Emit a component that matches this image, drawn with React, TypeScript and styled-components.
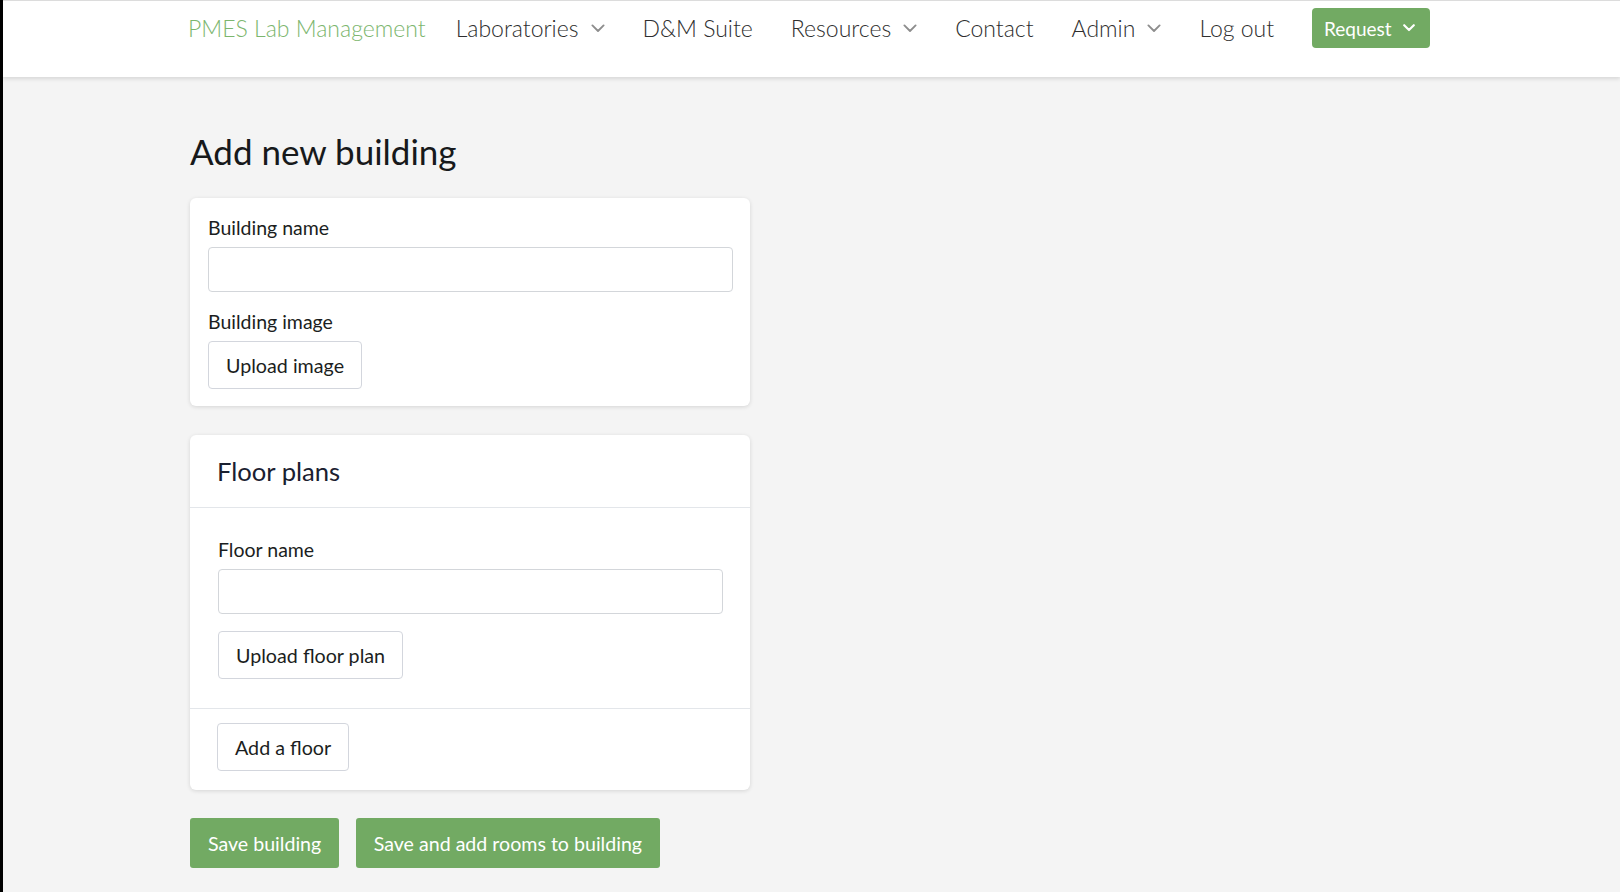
import styled, { createGlobalStyle } from "styled-components";

const GlobalStyle = createGlobalStyle`
  html, body {
    margin: 0;
    padding: 0;
    background: #f4f4f4;
    font-family: Lato, "Liberation Sans", sans-serif;
    color: #1b1e21;
  }
  #root {
    min-height: 892px;
    border-left: 3px solid #000;
    box-sizing: border-box;
  }
`;

const green = "#72aa63";

const Chevron: React.FC<{ color?: string; size?: number; weight?: number }> = ({
  color = "#8d8d8d",
  size = 14,
  weight = 1.3,
}) => (
  <svg width={size} height={size * 0.6} viewBox="0 0 10 6" fill="none">
    <path d="M1 1l4 4 4-4" stroke={color} strokeWidth={weight} strokeLinecap="round" strokeLinejoin="round" />
  </svg>
);

const App: React.FC = () => {
  return (
    <>
      <GlobalStyle />
      <Header>
        <Nav>
          <Brand>PMES Lab Management</Brand>
          <NavItem>Laboratories <Chevron /></NavItem>
          <NavItem>D&amp;M Suite</NavItem>
          <NavItem>Resources <Chevron /></NavItem>
          <NavItem>Contact</NavItem>
          <NavItem>Admin <Chevron /></NavItem>
          <NavItem>Log out</NavItem>
          <RequestButton>
            Request <Chevron color="#fff" size={12} weight={1.8} />
          </RequestButton>
        </Nav>
      </Header>

      <Main>
        <Title>Add new building</Title>

        <Card>
          <CardBody pad="18px 17px 17px 18px">
            <Label>Building name</Label>
            <Input type="text" />
            <Label spaced>Building image</Label>
            <OutlineButton>Upload image</OutlineButton>
          </CardBody>
        </Card>

        <Card gap>
          <CardHeader>Floor plans</CardHeader>
          <CardBody pad="30px 27px 29px 28px">
            <Label>Floor name</Label>
            <Input type="text" />
            <OutlineButton spaced>Upload floor plan</OutlineButton>
          </CardBody>
          <CardFooter>
            <OutlineButton>Add a floor</OutlineButton>
          </CardFooter>
        </Card>

        <Actions>
          <PrimaryButton>Save building</PrimaryButton>
          <PrimaryButton>Save and add rooms to building</PrimaryButton>
        </Actions>
      </Main>
    </>
  );
};

const Header = styled.header`
  height: 77px;
  background: #fff;
  border-top: 1px solid #dcdcdc;
  box-sizing: border-box;
  box-shadow: 0 2px 4px rgba(0, 0, 0, 0.12);
  position: relative;
`;

const Nav = styled.nav`
  display: flex;
  align-items: center;
  height: 54px;
  padding-left: 185px;
  gap: 38px;
`;

const Brand = styled.span`
  color: #7cb66e;
  font-size: 23px;
  font-weight: 300;
  margin-right: -8px;
`;

const NavItem = styled.span`
  display: flex;
  align-items: center;
  gap: 12px;
  color: #2e2e2e;
  font-size: 23px;
  font-weight: 300;
`;

const RequestButton = styled.button`
  display: flex;
  align-items: center;
  gap: 11px;
  height: 40px;
  padding: 0 15px 0 12px;
  border: none;
  border-radius: 4px;
  background: ${green};
  color: #fff;
  font-family: inherit;
  font-size: 19px;
`;

const Main = styled.main`
  padding: 53px 0 24px 187px;
  width: 560px;
`;

const Title = styled.h1`
  margin: 0 0 26px;
  font-size: 35px;
  font-weight: 400;
  line-height: 1.2;
  color: #17191b;
`;

const Card = styled.section<{ gap?: boolean }>`
  background: #fff;
  border-radius: 6px;
  box-shadow: 0 1px 4px rgba(0, 0, 0, 0.13);
  margin-top: ${p => (p.gap ? "29px" : "0")};
`;

const CardHeader = styled.div`
  height: 72px;
  display: flex;
  align-items: center;
  padding-left: 27px;
  font-size: 25.6px;
  color: #1a2030;
  border-bottom: 1px solid #e3e6ea;
`;

const CardBody = styled.div<{ pad: string }>`
  display: flex;
  flex-direction: column;
  align-items: flex-start;
  padding: ${p => p.pad};
`;

const CardFooter = styled.div`
  border-top: 1px solid #e3e6ea;
  padding: 14px 27px 19px;
`;

const Label = styled.label<{ spaced?: boolean }>`
  font-size: 19.5px;
  line-height: 23px;
  margin-top: ${p => (p.spaced ? "18px" : "0")};
  margin-bottom: 8px;
`;

const Input = styled.input`
  width: 100%;
  height: 45px;
  box-sizing: border-box;
  border: 1px solid #d3d6da;
  border-radius: 4px;
  background: #fff;
`;

const OutlineButton = styled.button<{ spaced?: boolean }>`
  height: 48px;
  padding: 0 17px;
  margin-top: ${p => (p.spaced ? "17px" : "0")};
  background: #fff;
  border: 1px solid #d3d6dd;
  border-radius: 4px;
  font-family: inherit;
  font-size: 19.7px;
  color: #1b1e21;
`;

const Actions = styled.div`
  display: flex;
  gap: 16.5px;
  margin-top: 28px;
`;

const PrimaryButton = styled.button`
  height: 50px;
  padding: 0 18px;
  background: ${green};
  border: none;
  border-radius: 3px;
  color: #fff;
  font-family: inherit;
  font-size: 19.6px;
`;

export default App;
